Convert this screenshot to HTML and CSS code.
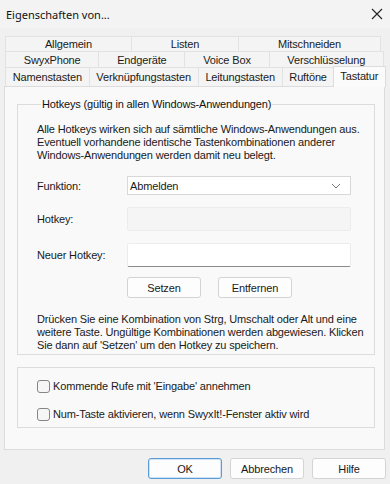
FILE: index.html
```html
<!DOCTYPE html>
<html lang="de">
<head>
    <meta charset="UTF-8">
    <meta name="viewport" content="width=device-width, initial-scale=1.0">
    <title>Eigenschaften von...</title>
    <link rel="stylesheet" href="styles.css">
</head>
<body>
<div class="dialog">
    <!-- Title bar -->
    <div class="titlebar">
        <span class="title">Eigenschaften von...</span>
        <svg class="close" width="12" height="12" viewBox="0 0 12 12">
            <path d="M1 1 L11 11 M11 1 L1 11" stroke="#222" stroke-width="1.1" fill="none"/>
        </svg>
    </div>

    <!-- Tab rows -->
    <div class="tabs">
        <div class="tab-row row1">
            <div class="tab">Allgemein</div>
            <div class="tab">Listen</div>
            <div class="tab">Mitschneiden</div>
        </div>
        <div class="tab-row row2">
            <div class="tab">SwyxPhone</div>
            <div class="tab">Endgeräte</div>
            <div class="tab">Voice Box</div>
            <div class="tab">Verschlüsselung</div>
        </div>
        <div class="tab-row row3">
            <div class="tab">Namenstasten</div>
            <div class="tab">Verknüpfungstasten</div>
            <div class="tab">Leitungstasten</div>
            <div class="tab">Ruftöne</div>
            <div class="tab active">Tastatur</div>
        </div>
    </div>

    <!-- Tab page -->
    <div class="panel">
        <fieldset class="group">
            <legend>Hotkeys (gültig in allen Windows-Anwendungen)</legend>
            <p class="info">Alle Hotkeys wirken sich auf sämtliche Windows-Anwendungen aus. Eventuell vorhandene identische Tastenkombinationen anderer Windows-Anwendungen werden damit neu belegt.</p>

            <div class="form-row row-select">
                <label>Funktion:</label>
                <div class="select">
                    <span>Abmelden</span>
                    <svg width="10" height="6" viewBox="0 0 10 6">
                        <path d="M1 1 L5 5 L9 1" stroke="#777" stroke-width="1" fill="none"/>
                    </svg>
                </div>
            </div>
            <div class="form-row row-field">
                <label>Hotkey:</label>
                <div class="field disabled"></div>
            </div>
            <div class="form-row row-field">
                <label>Neuer Hotkey:</label>
                <div class="field"></div>
            </div>
            <div class="form-row row-buttons">
                <span></span>
                <div class="buttons">
                    <button class="btn">Setzen</button>
                    <button class="btn">Entfernen</button>
                </div>
            </div>

            <p class="info hint">Drücken Sie eine Kombination von Strg, Umschalt oder Alt und eine weitere Taste. Ungültige Kombinationen werden abgewiesen. Klicken Sie dann auf 'Setzen' um den Hotkey zu speichern.</p>
        </fieldset>

        <div class="group checks">
            <label class="check"><span class="box"></span>Kommende Rufe mit 'Eingabe' annehmen</label>
            <label class="check"><span class="box"></span>Num-Taste aktivieren, wenn SwyxIt!-Fenster aktiv wird</label>
        </div>
    </div>

    <!-- Dialog buttons -->
    <div class="footer">
        <button class="btn default">OK</button>
        <button class="btn">Abbrechen</button>
        <button class="btn">Hilfe</button>
    </div>
</div>
</body>
</html>
```

FILE: styles.css
```css
body {
    margin: 0;
    padding: 0;
    background: #f0f0f0;
    font-family: 'Liberation Sans', Arial, sans-serif;
    font-size: 11px;
    letter-spacing: -0.15px;
    color: #1a1a1a;
}

.dialog {
    width: 390px;
    height: 484px;
    overflow: hidden;
}

.titlebar {
    height: 28px;
    display: flex;
    align-items: center;
    justify-content: space-between;
    padding: 0 7px 0 6px;
    background: #f3f3f3;
}

.title {
    font-family: 'Noto Sans', sans-serif;
    font-size: 11px;
    letter-spacing: 0;
    color: #111;
}

.tabs {
    margin-top: 8px;
    padding: 0 5px 0 5px;
}

.tab-row {
    display: flex;
}

.row1 {
    height: 15px;
    margin-right: 5px;
}

.row2 {
    height: 16px;
    margin-right: 2px;
}

.row3 {
    height: 19px;
    align-items: flex-end;
}

.tab {
    flex: 1 1 auto;
    display: flex;
    align-items: center;
    justify-content: center;
    background: #f4f4f4;
    border: 1px solid #e2e2e2;
    border-bottom: none;
    margin-right: -1px;
    white-space: nowrap;
    height: 100%;
    box-sizing: border-box;
}

.row3 .tab {
    height: 19px;
}

.tab.active {
    height: 21px;
    background: #fbfbfb;
    border-color: #dcdcdc;
    margin-left: -1px;
    margin-bottom: -1px;
    position: relative;
    padding-bottom: 3px;
}

.panel {
    margin: 0 5px 0 4px;
    height: 364px;
    box-sizing: border-box;
    background: #f9f9f9;
    border: 1px solid #dcdcdc;
    padding: 11px 9px 0 12px;
}

.group {
    border: 1px solid #dcdcdc;
    margin: 0;
}

fieldset.group {
    padding: 13px 10px 2px 19px;
}

legend {
    padding: 0 1px;
    margin-left: 4px;
    color: #111;
}

.info {
    margin: 0;
    line-height: 13px;
}

.form-row {
    display: grid;
    grid-template-columns: 90px 224px;
    align-items: center;
}

.row-select {
    margin-top: 14px;
}

.row-field {
    margin-top: 12px;
}

.row-buttons {
    margin-top: 10px;
}

.select {
    height: 19px;
    box-sizing: border-box;
    background: #fff;
    border: 1px solid #d8d8d8;
    display: flex;
    align-items: center;
    justify-content: space-between;
    padding: 0 9px 0 2px;
}

.field {
    height: 24px;
    box-sizing: border-box;
    background: #fff;
    border: 1px solid #ececec;
    border-bottom: 1px solid #8a8a8a;
    border-radius: 2px;
}

.field.disabled {
    background: #f5f5f5;
    border: 1px solid #ececec;
}

.buttons {
    display: flex;
    gap: 17px;
}

.btn {
    width: 74px;
    height: 21px;
    box-sizing: border-box;
    background: #fdfdfd;
    border: 1px solid #d4d4d4;
    border-radius: 3px;
    font-family: 'Liberation Sans', Arial, sans-serif;
    font-size: 11px;
    letter-spacing: -0.15px;
    color: #1a1a1a;
    padding: 0;
}

.hint {
    margin-top: 15px;
}

.checks {
    margin-top: 12px;
    height: 61px;
    box-sizing: border-box;
    padding: 11px 0 0 19px;
    display: flex;
    flex-direction: column;
    gap: 14px;
}

.check {
    display: flex;
    align-items: center;
    height: 14px;
}

.box {
    width: 13px;
    height: 13px;
    box-sizing: border-box;
    border: 1px solid #858585;
    border-radius: 3px;
    background: #f6f6f6;
    margin-right: 3px;
}

.footer {
    display: flex;
    justify-content: flex-end;
    gap: 8px;
    padding: 8px 4px 0 0;
}

.btn.default {
    border: 1px solid #5b9bd5;
    box-shadow: inset 0 0 0 1px #cfe3f6;
}
```
